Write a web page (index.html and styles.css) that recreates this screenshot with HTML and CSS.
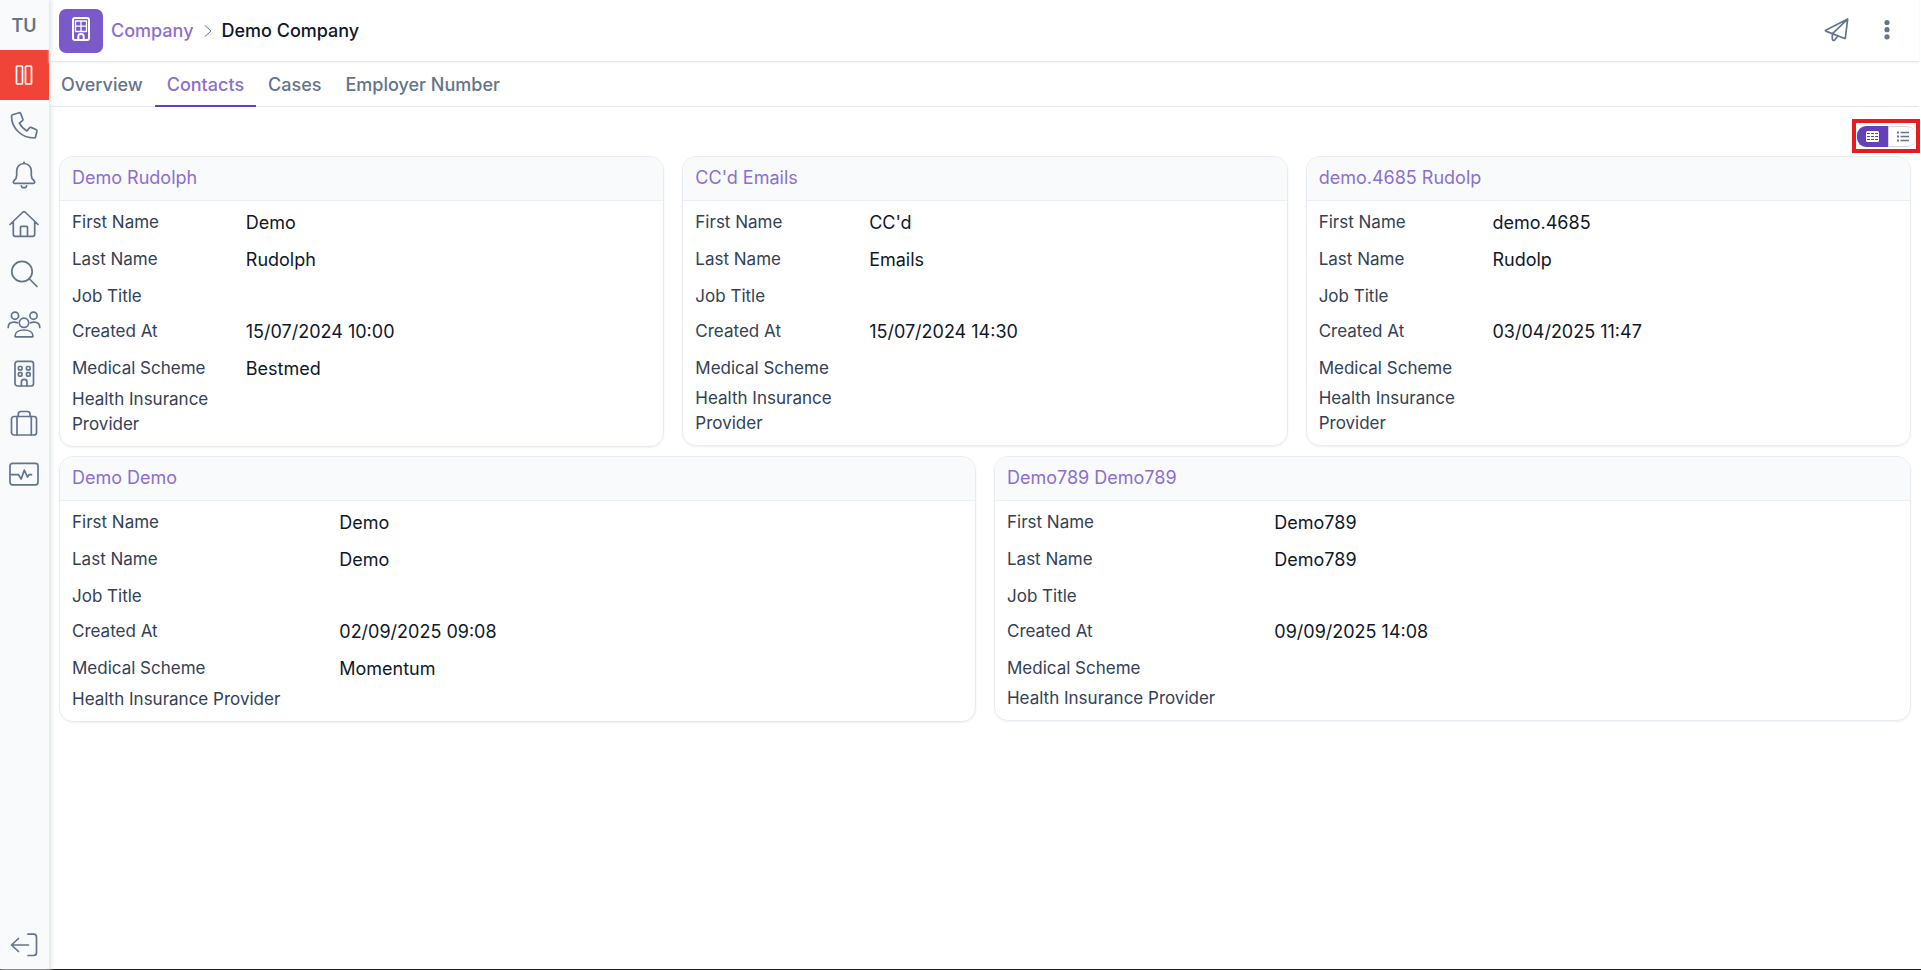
FILE: index.html
```html
<!DOCTYPE html>
<html lang="en">
<head>
<meta charset="utf-8">
<title>Demo Company - Contacts</title>
<link rel="stylesheet" href="styles.css">
</head>
<body>
<div class="app">
  <nav class="sidebar" aria-label="Main">
    <button class="side-item user" type="button">TU</button>
    <button class="side-item pause" type="button" aria-label="Pause">
      <svg width="18" height="22" viewBox="0 0 18 22"><rect x="1.500" y="2" width="6" height="18" rx="1"/><rect x="10.500" y="2" width="6" height="18" rx="1"/></svg>
    </button>
    <a class="side-item" href="#" aria-label="Calls">
      <svg width="30" height="30" viewBox="0 -1 30 30"><path d="M3.500 3.700 10.300 1.700 Q11.200 1.600 11.600 2.400 L13.900 8.300 Q14.100 9.100 13.500 9.600 L10.400 12.200 C12.200 15.800 14.600 18.100 18 19.900 L20.600 16.700 Q21.100 16.100 22 16.400 L27.300 18.700 Q28.200 19.100 28 20 L26.500 26 Q26.300 27 25.300 27 C12.300 27 2.500 17 2.500 5 Q2.500 4.100 3.500 3.700Z"/></svg>
    </a>
    <a class="side-item" href="#" aria-label="Notifications">
      <svg width="30" height="30" viewBox="0 0 30 30"><path d="M15 3.500V2M15 3.500C10.500 3.500 7.700 7 7.700 11V15.500C7.700 18 6.500 19.300 5 20.600 C3.800 21.700 4.200 23.300 5.600 23.300H24.400C25.800 23.300 26.200 21.700 25 20.600 C23.500 19.300 22.300 18 22.300 15.500V11C22.300 7 19.500 3.500 15 3.500ZM12.300 25.800C12.800 28.300 17.200 28.300 17.700 25.800"/></svg>
    </a>
    <a class="side-item" href="#" aria-label="Home">
      <svg width="30" height="30" viewBox="0 1 30 30"><path d="M1 15.500 14 3Q15 2.100 16 3L29 15.500M4.300 13V25.300Q4.300 27.300 6.300 27.300H23.700Q25.700 27.300 25.700 25.300V13M11.500 27V18Q11.500 17.300 12.200 17.300H17.800Q18.500 17.300 18.500 18V27"/></svg>
    </a>
    <a class="side-item" href="#" aria-label="Search">
      <svg width="30" height="30" viewBox="0 1 30 30"><circle cx="13" cy="12.500" r="10.200"/><path d="M20.500 20 28 27.500"/></svg>
    </a>
    <a class="side-item" href="#" aria-label="Contacts">
      <svg width="34" height="30" viewBox="0 0 34 30"><circle cx="8" cy="5.700" r="3.600"/><circle cx="26.500" cy="5.700" r="3.600"/><circle cx="17" cy="12.800" r="4.700"/><path d="M1.200 17.500C1.200 13.800 4 12.200 7 12.200 8.300 12.200 9.500 12.400 10.500 12.800M32.800 17.500C32.800 13.800 30 12.200 27 12.200 25.700 12.200 24.500 12.400 23.500 12.800M8 26.300C8 22.500 11.500 20 17 20S26 22.500 26 26.300Q26 26.800 25.500 26.800H8.500Q8 26.800 8 26.300Z"/></svg>
    </a>
    <a class="side-item" href="#" aria-label="Companies">
      <svg width="30" height="30" viewBox="0 1 30 30"><rect x="6" y="2.300" width="18.500" height="24.700" rx="2.500"/><rect x="9.400" y="7.500" width="3.600" height="3.400" rx="1"/><rect x="17.500" y="7.500" width="3.600" height="3.400" rx="1"/><rect x="9.400" y="13.700" width="3.600" height="3.400" rx="1"/><rect x="17.500" y="13.700" width="3.600" height="3.400" rx="1"/><path d="M12.400 27V23C12.400 19.500 18 19.500 18 23V27"/></svg>
    </a>
    <a class="side-item" href="#" aria-label="Cases">
      <svg width="30" height="30" viewBox="0 1 30 30"><rect x="2.500" y="7.500" width="25" height="18.500" rx="2.500"/><path d="M8 7.500V26M22.300 7.500V26M9.300 7.500V5Q9.300 2.500 11.800 2.500H18.500Q21 2.500 21 5V7.500"/></svg>
    </a>
    <a class="side-item" href="#" aria-label="Activity">
      <svg width="30" height="30" viewBox="0 1 30 30"><rect x="1" y="4.300" width="28" height="21.500" rx="2.500"/><path d="M2 15.700H9.500L12.200 20 15.300 11 18.500 18 20 15.700H22.500"/></svg>
    </a>
    <button class="side-item logout" type="button" aria-label="Log out">
      <svg width="30" height="30" viewBox="0 -1 30 30"><path d="M19 4.200H24.500Q27.500 4.200 27.500 7.200V22.500Q27.500 25.500 24.500 25.500H19M19.500 15H2.500M9.500 8.500 2.500 15 9.500 21.500"/></svg>
    </button>
  </nav>

  <div class="page">
    <header class="topbar">
      <span class="entity-icon">
        <svg width="20" height="26" viewBox="0 0 20 26"><rect x="2" y="2" width="16" height="22" rx="2"/><path class="panes" d="M4.500 5H15.500V15.500H4.500ZM10 5V15.500M4.500 10.200H15.500"/><path d="M7.300 24V20.500C7.300 17.300 12.700 17.300 12.700 20.500V24"/></svg>
      </span>
      <nav class="crumbs" aria-label="Breadcrumb">
        <a class="crumb-link" href="#">Company</a>
        <svg class="chevron" width="8" height="14" viewBox="0 0 8 14"><path d="M1 1.500 7 7 1 12.500"/></svg>
        <span>Demo Company</span>
      </nav>
      <div class="actions">
        <button class="icon-btn" type="button" aria-label="Send">
          <svg width="26" height="26" viewBox="0 0 26 26"><path d="M23.700 2 1.700 13.200Q1 13.700 1.800 14.100L20.700 21.500Q21.200 21.600 21.300 21ZM23.700 2 8.300 16.800V21.500Q8.500 24.300 10.700 23L13.800 19"/></svg>
        </button>
        <button class="icon-btn" type="button" aria-label="More options">
          <svg class="dots" width="26" height="26" viewBox="0 0 26 26"><circle cx="13" cy="5.500" r="2.600"/><circle cx="13" cy="12.700" r="2.600"/><circle cx="13" cy="19.800" r="2.600"/></svg>
        </button>
      </div>
    </header>

    <nav class="tabs" aria-label="Company sections">
      <a class="tab" href="#">Overview</a>
      <a class="tab active" href="#" aria-current="page">Contacts</a>
      <a class="tab" href="#">Cases</a>
      <a class="tab" href="#">Employer Number</a>
    </nav>

    <main class="content">
      <div class="toolbar">
        <div class="view-switch">
          <button class="view selected" type="button" aria-label="Card view" aria-pressed="true">
            <svg width="15" height="13" viewBox="0 0 15 13"><rect class="sheet" x="1" y="1" width="13" height="11" rx="1.500"/><path class="grid-lines" d="M2 3.500H13M2 6.500H13M2 9.500H13"/></svg>
          </button>
          <button class="view" type="button" aria-label="List view" aria-pressed="false">
            <svg width="14" height="13" viewBox="0 0 14 13"><path d="M4.500 2.500H13M4.500 6.500H13M4.500 10.500H13"/><path class="bullets" d="M1 2.500H3M1 6.500H3M1 10.500H3"/></svg>
          </button>
        </div>
      </div>

      <div class="cards">
        <article class="card">
          <h2 class="card-head"><a href="#">Demo Rudolph</a></h2>
          <dl class="fields">
            <div class="field"><dt>First Name</dt><dd>Demo</dd></div>
            <div class="field"><dt>Last Name</dt><dd>Rudolph</dd></div>
            <div class="field blank"><dt>Job Title</dt><dd></dd></div>
            <div class="field"><dt>Created At</dt><dd>15/07/2024 10:00</dd></div>
            <div class="field"><dt>Medical Scheme</dt><dd>Bestmed</dd></div>
            <div class="field compact"><dt>Health Insurance Provider</dt><dd></dd></div>
          </dl>
        </article>
        <article class="card">
          <h2 class="card-head"><a href="#">CC'd Emails</a></h2>
          <dl class="fields">
            <div class="field"><dt>First Name</dt><dd>CC'd</dd></div>
            <div class="field"><dt>Last Name</dt><dd>Emails</dd></div>
            <div class="field blank"><dt>Job Title</dt><dd></dd></div>
            <div class="field"><dt>Created At</dt><dd>15/07/2024 14:30</dd></div>
            <div class="field lookup"><dt>Medical Scheme</dt><dd></dd></div>
            <div class="field compact"><dt>Health Insurance Provider</dt><dd></dd></div>
          </dl>
        </article>
        <article class="card">
          <h2 class="card-head"><a href="#">demo.4685 Rudolp</a></h2>
          <dl class="fields">
            <div class="field"><dt>First Name</dt><dd>demo.4685</dd></div>
            <div class="field"><dt>Last Name</dt><dd>Rudolp</dd></div>
            <div class="field blank"><dt>Job Title</dt><dd></dd></div>
            <div class="field"><dt>Created At</dt><dd>03/04/2025 11:47</dd></div>
            <div class="field lookup"><dt>Medical Scheme</dt><dd></dd></div>
            <div class="field compact"><dt>Health Insurance Provider</dt><dd></dd></div>
          </dl>
        </article>
        <article class="card wide">
          <h2 class="card-head"><a href="#">Demo Demo</a></h2>
          <dl class="fields">
            <div class="field"><dt>First Name</dt><dd>Demo</dd></div>
            <div class="field"><dt>Last Name</dt><dd>Demo</dd></div>
            <div class="field blank"><dt>Job Title</dt><dd></dd></div>
            <div class="field"><dt>Created At</dt><dd>02/09/2025 09:08</dd></div>
            <div class="field"><dt>Medical Scheme</dt><dd>Momentum</dd></div>
            <div class="field compact"><dt>Health Insurance Provider</dt><dd></dd></div>
          </dl>
        </article>
        <article class="card wide">
          <h2 class="card-head"><a href="#">Demo789 Demo789</a></h2>
          <dl class="fields">
            <div class="field"><dt>First Name</dt><dd>Demo789</dd></div>
            <div class="field"><dt>Last Name</dt><dd>Demo789</dd></div>
            <div class="field blank"><dt>Job Title</dt><dd></dd></div>
            <div class="field"><dt>Created At</dt><dd>09/09/2025 14:08</dd></div>
            <div class="field lookup"><dt>Medical Scheme</dt><dd></dd></div>
            <div class="field compact"><dt>Health Insurance Provider</dt><dd></dd></div>
          </dl>
        </article>
      </div>
    </main>
  </div>
</div>
</body>
</html>
```

FILE: styles.css
```css
* {
  box-sizing: border-box;
}

body {
  margin: 0;
  background: #fff;
  color: #0f172a;
  font: 400 18px/25px Inter, "Liberation Sans", sans-serif;
}

a {
  color: inherit;
  text-decoration: none;
}

button {
  padding: 0;
  border: 0;
  background: none;
  color: inherit;
  font: inherit;
  cursor: pointer;
}

svg {
  display: block;
  fill: none;
  stroke: currentColor;
  stroke-width: 1.7;
  stroke-linecap: round;
  stroke-linejoin: round;
}

.app {
  display: flex;
  min-height: 100vh;
  border-bottom: 1px solid #1b1b1f;
}

/* Sidebar */
.sidebar {
  display: flex;
  flex: none;
  flex-direction: column;
  width: 49px;
  background: #f8fafc;
  box-shadow: 1px 0 5px 1px #dfe4e4;
  color: #64748b;
}

.side-item {
  display: flex;
  align-items: center;
  justify-content: center;
  height: 50px;
  padding-right: 1px;
}

.user {
  font-weight: 600;
}

.pause {
  background: #f04438;
  color: #fff;
}

.logout {
  margin-top: auto;
}

/* Header */
.page {
  flex: 1;
  min-width: 0;
  padding-right: 2px;
}

.topbar {
  display: flex;
  align-items: center;
  gap: 8px;
  height: 62px;
  padding: 0 19px 0 10px;
  border-bottom: 1px solid #e5e7eb;
  box-shadow: 0 1px 2px #f1f3f5;
}

.entity-icon {
  display: flex;
  align-items: center;
  justify-content: center;
  width: 44px;
  height: 44px;
  border-radius: 7px;
  background: #7a5ac8;
  color: #fff;
}

.entity-icon svg {
  margin-bottom: 4px;
  stroke-width: 2;
}

.panes {
  stroke-width: 1.3;
}

.crumbs {
  display: flex;
  align-items: center;
  gap: 10px;
  font-weight: 500;
}

.crumb-link {
  color: #8b6fd0;
}

.chevron {
  color: #64748b;
  stroke-width: 1;
}

.actions {
  display: flex;
  gap: 24px;
  margin-left: auto;
  color: #64748b;
}

.icon-btn {
  padding-bottom: 2px;
}

.dots {
  fill: currentColor;
  stroke: none;
}

/* Tabs */
.tabs {
  display: flex;
  height: 45px;
  border-bottom: 1px solid #e5e7eb;
  color: #64748b;
  font-weight: 500;
}

.tab {
  padding: 10px 12px 9px;
}

.tab.active {
  height: 45px;
  border-bottom: 2px solid #6540bb;
  color: #8b6fd0;
}

/* Content */
.content {
  padding: 12px 8px 0 10px;
}

.toolbar {
  display: flex;
  justify-content: flex-end;
  margin: 0 -9px 3px 0;
}

.view-switch {
  display: flex;
  border: 4px solid #e81c1c;
  padding: 3px 0 2px 1px;
}

.view {
  display: flex;
  align-items: center;
  justify-content: center;
  width: 28px;
  height: 21px;
  border: 1px solid #cbd5e1;
  border-right: 0;
  border-radius: 0 9px 9px 0;
  color: #64748b;
}

.view.selected {
  width: 31px;
  border: 0;
  border-radius: 9px 0 0 9px;
  background: #6540bb;
  color: #fff;
}

.view svg {
  stroke-linecap: butt;
}

.sheet {
  fill: #fff;
  stroke: none;
}

.grid-lines {
  stroke: #6540bb;
  stroke-width: 1;
  stroke-dasharray: 3 1;
}

.bullets {
  stroke-width: 2;
}

.cards {
  display: grid;
  grid-template-columns: repeat(6, 1fr);
  gap: 9px 18px;
  align-items: start;
}

.card {
  grid-column: span 2;
  overflow: hidden;
  border: 1px solid #e8ebef;
  border-radius: 14px;
  box-shadow: 0 1px 2px #eff1f3;
}

.card.wide {
  grid-column: span 3;
}

.card-head {
  margin: 0;
  padding: 8px 12px 10px;
  border-bottom: 1px solid #edf0f3;
  background: #f8fafc;
  color: #8b6fd0;
  font: inherit;
}

.fields {
  margin: 0;
  padding: 3px 12px 9px;
}

.field {
  display: grid;
  grid-template-columns: 30% 1fr;
  min-height: 37px;
  padding-top: 6px;
}

.field.blank {
  min-height: 35px;
}

.field.lookup {
  min-height: 36px;
}

.field.compact {
  min-height: 25px;
  padding-top: 0;
}

.field dt {
  color: #334155;
  font-size: 17px;
}

.field dd {
  margin: 0;
}
```
